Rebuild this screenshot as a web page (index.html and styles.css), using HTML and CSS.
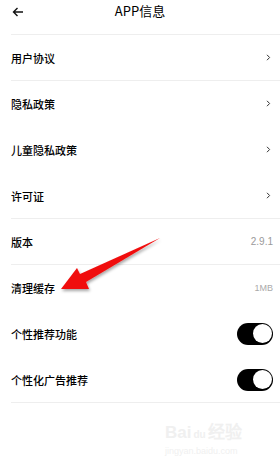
FILE: index.html
```html
<!DOCTYPE html>
<html lang="zh-CN">
  <head>
    <meta charset="UTF-8" />
    <meta name="viewport" content="width=device-width, initial-scale=1.0" />
    <title>APP信息</title>
    <link rel="stylesheet" href="styles.css">
  </head>

  <body>
    <div class="page">
      <div class="header">
        <svg class="back" width="12" height="10" viewBox="0 0 12 10">
          <path d="M11 5H1.5M5.5 1L1.5 5L5.5 9" fill="none" stroke="#111" stroke-width="1.4" />
        </svg>
        <h2>APP信息</h2>
      </div>

      <div class="row line">
        <span>用户协议</span>
        <svg class="chev" width="5" height="7" viewBox="0 0 5 7"><path d="M1 0.8l2.6 2.7-2.6 2.7" fill="none" stroke="#333" stroke-width="1" /></svg>
      </div>
      <div class="row">
        <span>隐私政策</span>
        <svg class="chev" width="5" height="7" viewBox="0 0 5 7"><path d="M1 0.8l2.6 2.7-2.6 2.7" fill="none" stroke="#333" stroke-width="1" /></svg>
      </div>
      <div class="row">
        <span>儿童隐私政策</span>
        <svg class="chev" width="5" height="7" viewBox="0 0 5 7"><path d="M1 0.8l2.6 2.7-2.6 2.7" fill="none" stroke="#333" stroke-width="1" /></svg>
      </div>
      <div class="row line">
        <span>许可证</span>
        <svg class="chev" width="5" height="7" viewBox="0 0 5 7"><path d="M1 0.8l2.6 2.7-2.6 2.7" fill="none" stroke="#333" stroke-width="1" /></svg>
      </div>
      <div class="row line">
        <span>版本</span>
        <span class="value">2.9.1</span>
      </div>
      <div class="row">
        <span>清理缓存</span>
        <span class="value small">1MB</span>
      </div>
      <div class="row">
        <span>个性推荐功能</span>
        <div class="toggle"><div class="knob"></div></div>
      </div>
      <div class="row line">
        <span>个性化广告推荐</span>
        <div class="toggle"><div class="knob"></div></div>
      </div>

      <div class="watermark">
        <div class="wm-logo">Bai<span class="paw">du</span>经验</div>
        <div class="wm-url">jingyan.baidu.com</div>
      </div>

      <!-- red annotation arrow -->
      <svg class="pointer" width="120" height="70" viewBox="0 0 120 70">
        <defs>
          <filter id="sh" x="-20%" y="-20%" width="140%" height="160%">
            <feDropShadow dx="1" dy="2" stdDeviation="1.5" flood-color="#000" flood-opacity="0.35" />
          </filter>
        </defs>
        <polygon points="11,52 27,31 30,37 110,1 36,45 39,52" fill="#f01010" filter="url(#sh)" />
      </svg>
    </div>
  </body>
</html>
```

FILE: styles.css
```css
body {
  margin: 0;
  background: #fff;
  font-family: "Noto Sans CJK SC", "Noto Sans", sans-serif;
  color: #000;
}

.page {
  position: relative;
  width: 280px;
  height: 470px;
  overflow: hidden;
}

.header {
  position: relative;
  height: 34px;
  margin-left: 11px;
  border-bottom: 1px solid #eee;
  display: flex;
  justify-content: center;
}

.header h2 {
  margin: 0;
  padding-top: 1px;
  font-size: 13px;
  font-weight: normal;
  line-height: 20px;
  margin-left: -11px;
}

.back {
  position: absolute;
  left: 1px;
  top: 7px;
}

.row {
  height: 45px;
  margin-left: 11px;
  padding-right: 7px;
  border-bottom: 1px solid transparent;
  display: flex;
  align-items: center;
  justify-content: space-between;
  font-size: 11px;
  font-weight: 500;
}

.row.line {
  border-bottom-color: #eee;
}

.chev {
  margin-right: 2px;
}

.value {
  color: #9a9a9a;
  font-family: "Liberation Sans", sans-serif;
  font-size: 10px;
  font-weight: normal;
}

.value.small {
  font-size: 9px;
  color: #aaa;
}

.toggle {
  width: 36px;
  height: 22px;
  border-radius: 11px;
  background: #000;
  display: flex;
  align-items: center;
  justify-content: flex-end;
  padding-right: 1px;
  box-sizing: border-box;
}

.knob {
  width: 19px;
  height: 19px;
  border-radius: 50%;
  background: #fff;
}

.watermark {
  margin: 20px 0 0 165px;
  color: #f0f0f0;
  font-family: "Liberation Sans", sans-serif;
}

.wm-logo {
  font-size: 17px;
  font-weight: bold;
  line-height: 20px;
}

.paw {
  font-size: 10px;
  margin: 0 2px;
}

.wm-url {
  font-size: 9px;
  line-height: 12px;
}

.pointer {
  position: absolute;
  left: 50px;
  top: 237px;
}
```
